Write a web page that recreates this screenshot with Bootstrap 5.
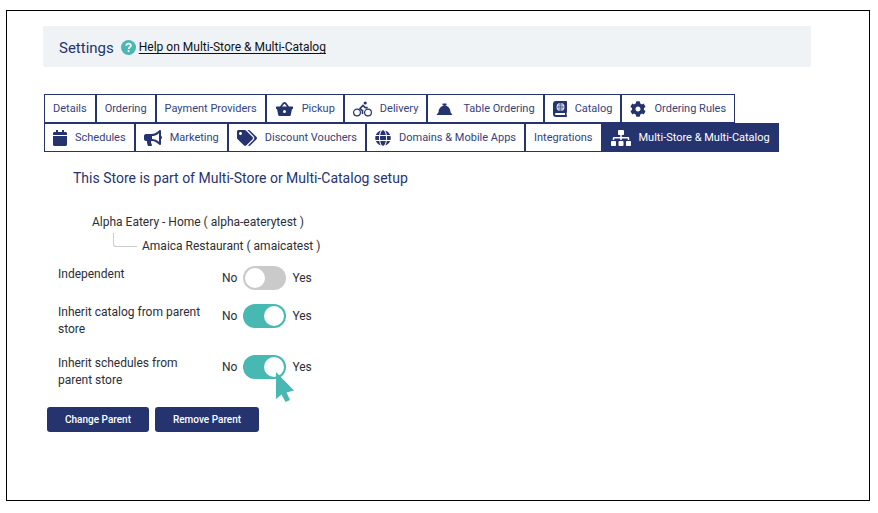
<!DOCTYPE html>
<html lang="en">
<head>
<meta charset="utf-8">
<meta name="viewport" content="width=device-width, initial-scale=1">
<title>Settings</title>
<link href="https://cdn.jsdelivr.net/npm/bootstrap@5.3.0/dist/css/bootstrap.min.css" rel="stylesheet">
<style>
:root { --navy: #25346f; --teal: #48b8b3; }
body { font-family: Roboto, "Liberation Sans", sans-serif; font-size: 12px; line-height: 17px; color: #2b2e36; background: #fff; padding: 10px 8px 12px 6px; }
.page-frame { border: 1px solid #000; min-height: calc(100vh - 22px); padding: 15px 58px 48px 36px; }
.title-bar { background: #eff3f6; min-height: 41px; padding: 2px 16px 0; border-radius: 2px; gap: 7px; }
.title-bar h1 { font-size: 15px; line-height: 20px; color: var(--navy); font-weight: 400; }
.help-link { color: #111; gap: 3px; text-decoration: none; }
.help-link span { text-decoration: underline; text-underline-offset: 2px; }
.help-link svg { width: 15px; height: 15px; }
.tab-strip { margin-top: 27px; padding-left: 1px; font-size: 11px; }
.tab-strip .nav-link { display: flex; align-items: center; gap: 8px; height: 29px; padding: 0 8px; border: 1px solid var(--navy); color: #34437c; }
.tab-strip .nav-link.active { background: var(--navy); color: #fff; }
.tab-strip svg { height: 16px; fill: var(--navy); flex: none; }
.tab-strip .active svg { fill: #fff; }
.section-title { font-size: 14px; line-height: 20px; color: var(--navy); font-weight: 400; margin: 16px 0 0 30px; }
.store-tree, .store-tree ul { list-style: none; margin: 0; padding: 0; }
.store-tree { margin: 26px 0 0 49px; }
.store-tree ul { padding-left: 21px; }
.store-tree ul li { display: flex; gap: 5px; padding-top: 7px; }
.store-tree ul li::before { content: ""; width: 24px; height: 14px; margin-top: -5px; border: solid #ccc; border-width: 0 0 1px 1px; border-radius: 0 0 0 3px; }
.options { margin: 11px 0 0 15px; }
.option-row { min-height: 38px; }
.option-name { width: 144px; margin-right: 20px; padding-bottom: 17px; }
.switch-set { gap: 6px; height: 24px; }
.switch-set input { appearance: none; width: 43px; height: 24px; margin: 0; border-radius: 12px; background: #cacaca; padding: 2px; display: flex; }
.switch-set input::before { content: ""; width: 20px; height: 20px; border-radius: 50%; background: #fff; }
.switch-set input:checked { background: var(--teal); justify-content: flex-end; }
.pointer { width: 20px; height: 32px; left: 54px; top: 17px; }
.actions { gap: 6px; margin: 1px 0 0 4px; }
.btn-navy { --bs-btn-color: #fff; --bs-btn-bg: var(--navy); --bs-btn-hover-color: #fff; --bs-btn-hover-bg: #1b2859; --bs-btn-font-size: 10px; --bs-btn-font-weight: 500; --bs-btn-line-height: 15px; --bs-btn-padding-y: 4px; --bs-btn-padding-x: 17px; --bs-btn-border-radius: 3px; }
</style>
</head>
<body>
<main class="page-frame">
  <header class="title-bar d-flex align-items-center">
    <h1 class="m-0">Settings</h1>
    <a class="help-link d-flex align-items-center" href="#help">
      <svg viewBox="0 0 16 16" aria-hidden="true"><circle cx="8" cy="8" r="8" fill="#48b8b3"/><path d="M5.6 6.2C5.7 4.7 6.700 3.900 8.100 3.900 9.600 3.900 10.500 4.800 10.500 6 10.500 7.800 8.100 7.700 8.100 9.500" fill="none" stroke="#fff" stroke-width="1.900"/><circle cx="8.100" cy="11.800" r="1.200" fill="#fff"/></svg>
      <span>Help on Multi-Store &amp; Multi-Catalog</span>
    </a>
  </header>

  <nav class="tab-strip nav" aria-label="Settings sections">
    <a class="nav-link" href="#details">Details</a>
    <a class="nav-link" href="#ordering">Ordering</a>
    <a class="nav-link" href="#payment">Payment Providers</a>
    <a class="nav-link" href="#pickup"><svg width="19" viewBox="-1 0 19 16" aria-hidden="true"><path fill-rule="evenodd" d="M.5 5.500H4L7 1.600Q8.500.2 10 1.600L13 5.500h3.500q.5 0 .5.5v1.500q0 .5-.5.5H16l-1.300 6.200Q14.500 15 13.700 15H3.300Q2.500 15 2.300 14.200L1 8H.5Q0 8 0 7.500V6Q0 5.500.5 5.500ZM6 5.500h5L8.900 2.900q-.4-.4-.8 0ZM8.500 9a1.500 1.500 0 1 0 0 3 1.500 1.500 0 0 0 0-3Z"/></svg>Pickup</a>
    <a class="nav-link" href="#delivery"><svg width="19" viewBox="0 0 19 16" aria-hidden="true"><g fill="none" stroke="#25346f"><circle cx="4" cy="11.500" r="3.400" stroke-width="1.200"/><circle cx="15" cy="11.500" r="3.400" stroke-width="1.200"/><path d="M9.500 13V9.600L6.900 7.500 10.100 4.400 12 6.600H14.700" stroke-width="1.600" stroke-linejoin="round"/></g><circle cx="12.200" cy="2" r="1.600"/></svg>Delivery</a>
    <a class="nav-link" href="#table"><svg width="19" viewBox="0 0 19 16" aria-hidden="true"><path d="M.5 14 2.500 11.300C2.500 8 4.500 5.300 7.500 4.600V4H7Q6.300 4 6.300 3.300 6.300 2.600 7 2.600h3q.7 0 .7.700T10 4H9.500v.6C12.500 5.300 14.500 8 14.500 11.300L16.500 14Z"/></svg>Table Ordering</a>
    <a class="nav-link" href="#catalog"><svg width="14" viewBox="0 0 14 16" aria-hidden="true"><path fill-rule="evenodd" d="M3 0H13.200Q14 0 14 .8V11q0 .5-.4.8v2.200q.4.200.4.600v.6q0 .8-.8.800H3Q0 16 0 13V3Q0 0 3 0ZM3 12q-1 0-1 1t1 1h9V12Z"/><circle cx="7.500" cy="6" r="4" fill="#e3e6f1"/><g fill="none" stroke="#25346f" stroke-width=".6"><ellipse cx="7.500" cy="6" rx="1.700" ry="4"/><path d="M3.500 6h8M7.500 2v8"/></g></svg>Catalog</a>
    <a class="nav-link" href="#rules"><svg width="16" viewBox="0 0 512 512" aria-hidden="true"><path d="M487.400 315.700l-42.600-24.600c4.300-23.200 4.300-47 0-70.200l42.600-24.600c4.900-2.800 7.100-8.600 5.500-14-11.100-35.600-30-67.800-54.700-94.600-3.800-4.100-10-5.100-14.800-2.300L380.800 110c-17.900-15.400-38.500-27.300-60.800-35.100V25.800c0-5.600-3.900-10.500-9.400-11.700-36.700-8.200-74.300-7.800-109.200 0-5.500 1.200-9.400 6.100-9.400 11.700V75c-22.200 7.900-42.800 19.800-60.800 35.100L88.700 85.500c-4.900-2.800-11-1.900-14.800 2.300-24.700 26.700-43.600 58.900-54.700 94.600-1.700 5.400.6 11.200 5.500 14L67.300 221c-4.300 23.200-4.300 47 0 70.200l-42.600 24.600c-4.900 2.800-7.100 8.600-5.500 14 11.100 35.600 30 67.800 54.700 94.600 3.800 4.100 10 5.100 14.800 2.300l42.600-24.600c17.900 15.400 38.500 27.300 60.800 35.100v49.200c0 5.600 3.900 10.500 9.400 11.700 36.700 8.200 74.300 7.800 109.200 0 5.500-1.200 9.400-6.100 9.400-11.700v-49.200c22.200-7.900 42.800-19.800 60.800-35.100l42.600 24.600c4.900 2.800 11 1.900 14.800-2.300 24.700-26.700 43.600-58.900 54.700-94.600 1.500-5.500-.7-11.300-5.600-14.100zM256 336c-44.100 0-80-35.900-80-80s35.900-80 80-80 80 35.900 80 80-35.900 80-80 80z"/></svg>Ordering Rules</a>
    <a class="nav-link" href="#schedules"><svg width="14" viewBox="0 0 448 512" aria-hidden="true"><path d="M12 192h424c6.600 0 12 5.400 12 12v260c0 26.500-21.500 48-48 48H48c-26.500 0-48-21.500-48-48V204c0-6.600 5.400-12 12-12zm436-44v-36c0-26.500-21.500-48-48-48h-48V12c0-6.600-5.400-12-12-12h-40c-6.600 0-12 5.400-12 12v52H160V12c0-6.600-5.400-12-12-12h-40c-6.600 0-12 5.400-12 12v52H48C21.500 64 0 85.500 0 112v36c0 6.600 5.400 12 12 12h424c6.600 0 12-5.400 12-12z"/></svg>Schedules</a>
    <a class="nav-link" href="#marketing"><svg width="18" viewBox="0 0 576 512" aria-hidden="true"><path d="M576 240c0-23.630-12.950-44.040-32-55.120V32.010C544 23.260 537.020 0 512 0c-7.120 0-14.190 2.380-19.980 7.020l-85.030 68.030C364.280 109.190 310.660 128 256 128H64c-35.350 0-64 28.650-64 64v96c0 35.350 28.650 64 64 64h33.700c-1.390 10.480-2.180 21.140-2.180 32 0 39.770 9.260 77.350 25.560 110.940 5.190 10.690 16.520 17.060 28.400 17.060h74.280c26.050 0 41.690-29.840 25.900-50.560-16.400-21.520-26.150-48.360-26.150-77.440 0-11.110 1.620-21.790 4.410-32H256c54.660 0 108.280 18.810 150.980 52.950l85.030 68.030a32.023 32.023 0 0 0 19.980 7.020c24.920 0 32-22.780 32-32V295.130C563.050 284.040 576 263.630 576 240zm-96 141.420l-33.050-26.440C392.950 311.780 325.120 288 256 288v-96c69.120 0 136.950-23.780 190.950-66.980L480 98.580v282.840z"/></svg>Marketing</a>
    <a class="nav-link" href="#vouchers"><svg width="20" viewBox="0 0 640 512" aria-hidden="true"><path d="M497.941 225.941L286.059 14.059A48 48 0 0 0 252.118 0H48C21.490 0 0 21.490 0 48v204.118a48 48 0 0 0 14.059 33.941l211.882 211.882c18.744 18.745 49.136 18.746 67.882 0l204.118-204.118c18.745-18.745 18.745-49.137 0-67.882zM112 160c-26.510 0-48-21.490-48-48s21.490-48 48-48 48 21.490 48 48-21.490 48-48 48zm513.941 133.823L421.823 497.941c-18.745 18.745-49.137 18.745-67.882 0l-.36-.36L527.640 323.522c16.999-16.999 26.360-39.600 26.360-63.640s-9.362-46.641-26.360-63.640L331.397 0h48.721a48 48 0 0 1 33.941 14.059l211.882 211.882c18.745 18.745 18.745 49.137 0 67.882z"/></svg>Discount Vouchers</a>
    <a class="nav-link" href="#domains"><svg width="16" viewBox="0 0 496 512" aria-hidden="true"><path d="M336.500 160C322 70.700 287.800 8 248 8s-74 62.700-88.500 152h177zM152 256c0 22.200 1.200 43.500 3.300 64h185.300c2.100-20.500 3.300-41.800 3.300-64s-1.200-43.500-3.300-64H155.300c-2.100 20.500-3.300 41.800-3.300 64zm324.700-96c-28.600-67.900-86.500-120.400-158-141.600 24.400 33.800 41.200 84.700 50 141.600h108zM177.200 18.400C105.800 39.600 47.800 92.100 19.300 160h108c8.700-56.900 25.500-107.800 49.900-141.600zM487.400 192H372.700c2.100 21 3.300 42.500 3.300 64s-1.200 43-3.300 64h114.600c5.500-20.500 8.600-41.800 8.600-64s-3.100-43.500-8.500-64zM120 256c0-21.500 1.200-43 3.300-64H8.600C3.200 212.500 0 233.800 0 256s3.200 43.500 8.600 64h114.600c-2-21-3.200-42.500-3.200-64zm39.500 96c14.500 89.300 48.700 152 88.500 152s74-62.700 88.500-152h-177zm159.300 141.600c71.400-21.200 129.400-73.700 158-141.600h-108c-8.800 56.900-25.600 107.800-50 141.600zM19.300 352c28.600 67.900 86.500 120.400 158 141.600-24.400-33.800-41.200-84.700-50-141.600h-108z"/></svg>Domains &amp; Mobile Apps</a>
    <a class="nav-link" href="#integrations">Integrations</a>
    <a class="nav-link active" aria-current="page" href="#multi"><svg width="20" viewBox="0 0 640 512" aria-hidden="true"><path d="M128 352H32c-17.670 0-32 14.330-32 32v96c0 17.670 14.330 32 32 32h96c17.670 0 32-14.330 32-32v-96c0-17.670-14.330-32-32-32zm-24-80h192v48h48v-48h192v48h48v-57.590c0-21.170-17.230-38.410-38.410-38.410H344v-64h40c17.670 0 32-14.330 32-32V32c0-17.670-14.330-32-32-32H256c-17.670 0-32 14.330-32 32v96c0 17.670 14.330 32 32 32h40v64H94.410C73.230 224 56 241.230 56 262.410V320h48v-48zm264 80h-96c-17.670 0-32 14.330-32 32v96c0 17.670 14.330 32 32 32h96c17.670 0 32-14.330 32-32v-96c0-17.670-14.330-32-32-32zm240 0h-96c-17.670 0-32 14.330-32 32v96c0 17.670 14.330 32 32 32h96c17.670 0 32-14.330 32-32v-96c0-17.670-14.330-32-32-32z"/></svg>Multi-Store &amp; Multi-Catalog</a>
  </nav>

  <h2 class="section-title">This Store is part of Multi-Store or Multi-Catalog setup</h2>
  <ul class="store-tree">
    <li>Alpha Eatery - Home ( alpha-eaterytest )
      <ul><li>Amaica Restaurant ( amaicatest )</li></ul>
    </li>
  </ul>

  <form>
    <div class="options">
      <div class="d-flex option-row">
        <label class="option-name" for="independent">Independent</label>
        <div class="switch-set d-flex align-items-center"><span>No</span><input type="checkbox" role="switch" id="independent"><span>Yes</span></div>
      </div>
      <div class="d-flex option-row">
        <label class="option-name" for="inherit-catalog">Inherit catalog from parent store</label>
        <div class="switch-set d-flex align-items-center"><span>No</span><input type="checkbox" role="switch" id="inherit-catalog" checked><span>Yes</span></div>
      </div>
      <div class="d-flex option-row">
        <label class="option-name" for="inherit-schedules">Inherit schedules from parent store</label>
        <div class="switch-set d-flex align-items-center position-relative"><span>No</span><input type="checkbox" role="switch" id="inherit-schedules" checked><span>Yes</span>
          <svg class="pointer position-absolute" viewBox="0 0 20 32" aria-hidden="true"><path d="M0 0V27L5.500 22.500 9.500 30 14 28 10.500 20.500 18 18.500Z" fill="#48b8b3"/></svg>
        </div>
      </div>
    </div>
    <div class="actions d-flex">
      <button class="btn btn-navy" type="button">Change Parent</button>
      <button class="btn btn-navy" type="button">Remove Parent</button>
    </div>
  </form>
</main>
<script src="https://cdn.jsdelivr.net/npm/bootstrap@5.3.0/dist/js/bootstrap.bundle.min.js"></script>
</body>
</html>
